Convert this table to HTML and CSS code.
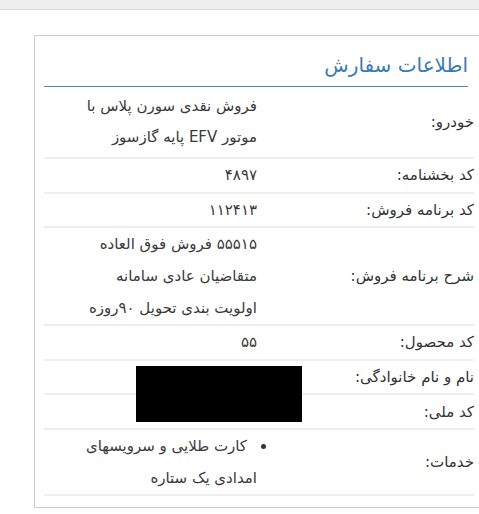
FILE: index.html
```html
<!DOCTYPE html>
<html lang="fa">
<head>
<meta charset="utf-8">
<title>اطلاعات سفارش</title>
<link rel="stylesheet" href="styles.css">
</head>
<body>
<div class="topbar"></div>
<section class="card" dir="rtl">
  <h2 class="title">اطلاعات سفارش</h2>
  <div class="rows">
    <div class="row row-car">
      <div class="label">خودرو:</div>
      <div class="value">فروش نقدی سورن پلاس با<br>موتور EFV پایه گازسوز</div>
    </div>
    <div class="row">
      <div class="label">کد بخشنامه:</div>
      <div class="value">۴۸۹۷</div>
    </div>
    <div class="row">
      <div class="label">کد برنامه فروش:</div>
      <div class="value">۱۱۲۴۱۳</div>
    </div>
    <div class="row">
      <div class="label">شرح برنامه فروش:</div>
      <div class="value">۵۵۵۱۵ فروش فوق العاده<br>متقاضیان عادی سامانه<br>اولویت بندی تحویل ۹۰روزه</div>
    </div>
    <div class="row">
      <div class="label">کد محصول:</div>
      <div class="value">۵۵</div>
    </div>
    <div class="row">
      <div class="label">نام و نام خانوادگی:</div>
      <div class="value"></div>
    </div>
    <div class="row">
      <div class="label">کد ملی:</div>
      <div class="value"></div>
    </div>
    <div class="row">
      <div class="label">خدمات:</div>
      <div class="value">
        <ul class="services">
          <li>کارت طلایی و سرویسهای<br>امدادی یک ستاره</li>
        </ul>
      </div>
    </div>
  </div>
  <div class="redact"></div>
</section>
</body>
</html>
```
FILE: styles.css
```css
html, body {
  margin: 0;
  padding: 0;
  background: #ffffff;
  overflow: hidden;
}
body {
  font-family: "DejaVu Sans", "Noto Sans", sans-serif;
  color: #333333;
}
.topbar {
  height: 9px;
  background: #eeeeee;
  border-bottom: 1px solid #dadada;
}
.card {
  position: relative;
  margin: 25px 0 0 34px;
  width: 430px;
  padding: 0 10px 11px 9px;
  border: 1px solid #cfcfcf;
  background: #ffffff;
}
.title {
  margin: 0 6px 0 0;
  padding: 14px 0 6px;
  font-size: 20px;
  line-height: 30px;
  font-weight: normal;
  color: #3b7ab0;
  border-bottom: 1px solid #4f88b6;
}
.rows {
  display: flex;
  flex-direction: column;
}
.row {
  display: grid;
  grid-template-columns: 217px 1fr;
  align-items: center;
  border-bottom: 2px solid #eeeeee;
  min-height: 32.6px;
}
.label {
  font-size: 15px;
  line-height: 22px;
  white-space: nowrap;
}
.value {
  font-size: 15px;
  line-height: 32px;
  white-space: nowrap;
  color: #3a3a3a;
}
.row-car .value {
  line-height: 31px;
  padding: 4px 0;
}
.services {
  list-style: none;
  margin: 0;
  padding: 0;
}
.services li {
  line-height: 32px;
}
.services li::before {
  content: "";
  display: inline-block;
  width: 5px;
  height: 5px;
  border-radius: 50%;
  background: #333333;
  vertical-align: middle;
  margin-inline-start: -9px;
  margin-inline-end: 14px;
}
.redact {
  position: absolute;
  left: 101px;
  top: 330px;
  width: 166px;
  height: 56px;
  background: #000000;
}
```
